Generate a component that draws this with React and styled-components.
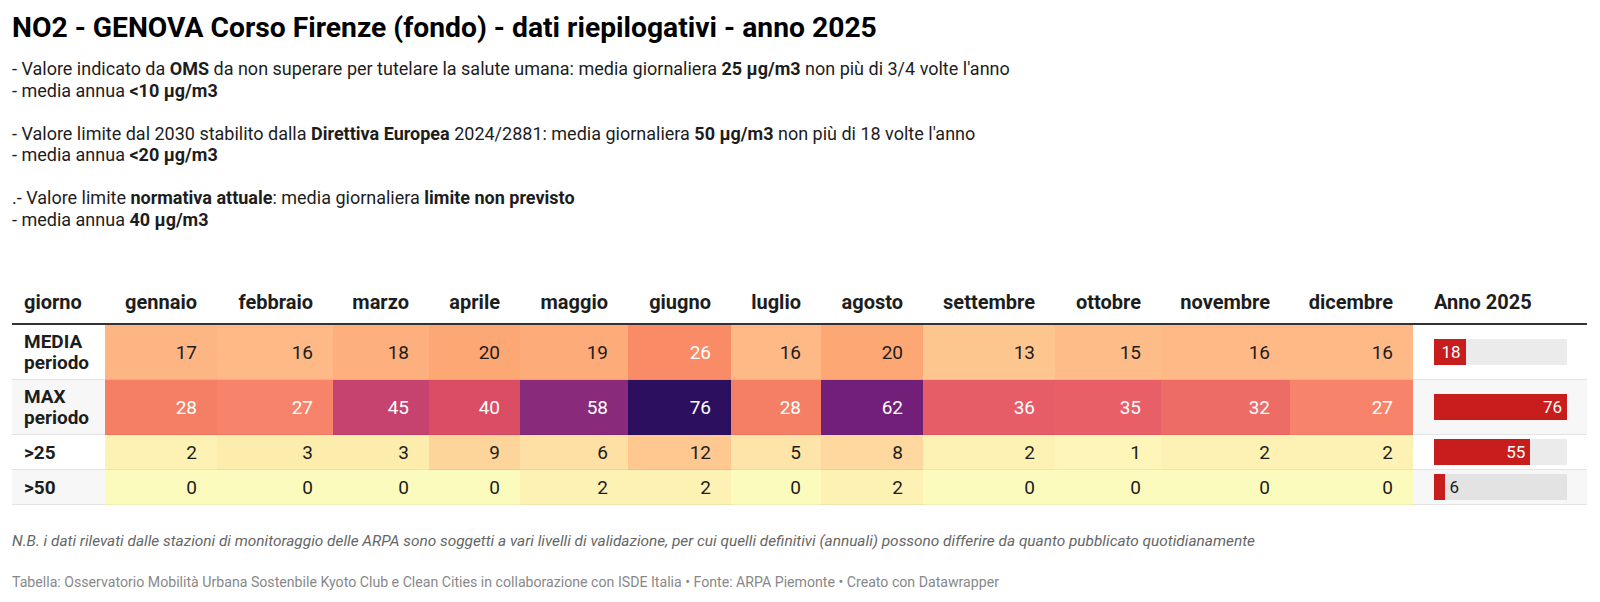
import React from "react";
import styled, { createGlobalStyle } from "styled-components";

const Global = createGlobalStyle`
  html, body { margin: 0; padding: 0; background: #fff; }
  body { font-family: Roboto, "Noto Sans", "Liberation Sans", sans-serif; color: #1d1d1d; }
`;

const Page = styled.div`
  padding: 12px 13px 0 12px;
  width: 1600px;
  box-sizing: border-box;
`;

const Title = styled.h1`
  margin: 0;
  font-size: 28.25px;
  line-height: 32px;
  font-weight: 700;
  color: #000;
`;

const Description = styled.div`
  margin-top: 14px;
  font-size: 18px;
  line-height: 21.5px;
  color: #1d1d1d;
`;

const Para = styled.p`
  margin: 0 0 21.5px 0;
  &:last-child { margin-bottom: 0; }
`;

const Table = styled.table`
  margin-top: 51px;
  width: 1575px;
  border-collapse: collapse;
  table-layout: fixed;
`;

const HeadCell = styled.th`
  font-size: 20px;
  font-weight: 700;
  line-height: 24px;
  color: #1d1d1d;
  text-align: ${(p) => p.$align};
  padding: 9px ${(p) => (p.$align === "right" ? "20px" : "0")} 9px
    ${(p) => (p.$first ? "12px" : p.$align === "left" ? "21px" : "0")};
  border-bottom: 2px solid #333;
  white-space: nowrap;
`;

const Row = styled.tr`
  background: ${(p) => (p.$striped ? "#f7f7f7" : "#fff")};
`;

const LabelCell = styled.td`
  font-size: 19px;
  font-weight: 700;
  line-height: 21px;
  padding: 6px 0 6px 12px;
  border-bottom: 1px solid #e3e3e3;
  color: #1d1d1d;
`;

const HeatCell = styled.td`
  font-size: 19px;
  line-height: 21px;
  text-align: right;
  padding: 6px 20px 6px 0;
  background: ${(p) => p.$bg};
  color: ${(p) => (p.$light ? "#fff" : "#1d1d1d")};
  border-bottom: 1px solid rgba(0, 0, 0, 0.05);
`;

const BarCell = styled.td`
  padding: 4px 20px 4px 21px;
  border-bottom: 1px solid #e3e3e3;
`;

const Track = styled.div`
  width: 133px;
  height: 26px;
  background: rgba(0, 0, 0, 0.08);
  display: flex;
`;

const Fill = styled.div`
  height: 100%;
  background: #c71e1d;
  display: flex;
  align-items: center;
  justify-content: flex-end;
  box-sizing: border-box;
  padding-right: 5px;
  color: #fff;
  font-size: 17px;
  line-height: 26px;
`;

const Outside = styled.span`
  font-size: 17px;
  line-height: 26px;
  color: #1d1d1d;
  padding-left: 5px;
`;

const Note = styled.p`
  margin: 26px 0 0 0;
  font-size: 15.4px;
  line-height: 20px;
  font-style: italic;
  color: #666;
`;

const Footer = styled.p`
  margin: 22px 0 0 0;
  font-size: 14.15px;
  line-height: 18px;
  color: #888;
`;

const Col = styled.col``;

const colWidths = [93, 112, 116, 96, 91, 108, 103, 90, 102, 132, 106, 129, 123, 174];
const months = [
  "gennaio", "febbraio", "marzo", "aprile", "maggio", "giugno",
  "luglio", "agosto", "settembre", "ottobre", "novembre", "dicembre",
];

const palette = {
  0: "#fcfbbe", 1: "#fdf6b8", 2: "#fdf2b4", 3: "#fdedad", 5: "#fee4a8",
  6: "#fee0a4", 8: "#fed89e", 9: "#fdd49a", 12: "#fec890", 13: "#fec68f",
  15: "#febc88", 16: "#feb986", 17: "#fdb584", 18: "#fdb07e", 19: "#fdab78",
  20: "#fca774", 26: "#f98b67", 27: "#f6836a", 28: "#f47f64", 32: "#ee6c66",
  35: "#e85f67", 36: "#e65d67", 40: "#da4d65", 45: "#c5436e", 58: "#892a7a",
  62: "#721f79", 76: "#2c0f5e",
};

const rows = [
  { label: ["MEDIA", "periodo"], values: [17, 16, 18, 20, 19, 26, 16, 20, 13, 15, 16, 16], total: 18 },
  { label: ["MAX", "periodo"], values: [28, 27, 45, 40, 58, 76, 28, 62, 36, 35, 32, 27], total: 76 },
  { label: [">25"], values: [2, 3, 3, 9, 6, 12, 5, 8, 2, 1, 2, 2], total: 55 },
  { label: [">50"], values: [0, 0, 0, 0, 2, 2, 0, 2, 0, 0, 0, 0], total: 6 },
];

const MAX = 76;

function Bar({ value }) {
  const w = (value / MAX) * 133;
  const inside = w > 28;
  return (
    <Track>
      <Fill style={{ width: `${w}px` }}>{inside ? value : null}</Fill>
      {!inside && <Outside>{value}</Outside>}
    </Track>
  );
}

export default function App() {
  return (
    <Page>
      <Global />
      <Title>NO2 - GENOVA Corso Firenze (fondo) - dati riepilogativi - anno 2025</Title>
      <Description>
        <Para>
          - Valore indicato da <b>OMS</b> da non superare per tutelare la salute umana: media giornaliera{" "}
          <b>25 µg/m3</b> non più di 3/4 volte l'anno
          <br />- media annua <b>&lt;10 µg/m3</b>
        </Para>
        <Para>
          - Valore limite dal 2030 stabilito dalla <b>Direttiva Europea</b> 2024/2881: media giornaliera{" "}
          <b>50 µg/m3</b> non più di 18 volte l'anno
          <br />- media annua <b>&lt;20 µg/m3</b>
        </Para>
        <Para>
          .- Valore limite <b>normativa attuale</b>: media giornaliera <b>limite non previsto</b>
          <br />- media annua <b>40 µg/m3</b>
        </Para>
      </Description>
      <Table>
        <colgroup>
          {colWidths.map((w, i) => (
            <Col key={i} style={{ width: `${w}px` }} />
          ))}
        </colgroup>
        <thead>
          <tr>
            <HeadCell $align="left" $first>giorno</HeadCell>
            {months.map((m) => (
              <HeadCell key={m} $align="right">{m}</HeadCell>
            ))}
            <HeadCell $align="left">Anno 2025</HeadCell>
          </tr>
        </thead>
        <tbody>
          {rows.map((r, ri) => (
            <Row key={ri} $striped={ri % 2 === 1}>
              <LabelCell>
                {r.label.map((l, li) => (
                  <React.Fragment key={li}>
                    {li > 0 && <br />}
                    {l}
                  </React.Fragment>
                ))}
              </LabelCell>
              {r.values.map((v, vi) => (
                <HeatCell key={vi} $bg={palette[v]} $light={v >= 26}>
                  {v}
                </HeatCell>
              ))}
              <BarCell>
                <Bar value={r.total} />
              </BarCell>
            </Row>
          ))}
        </tbody>
      </Table>
      <Note>
        N.B. i dati rilevati dalle stazioni di monitoraggio delle ARPA sono soggetti a vari livelli di validazione, per cui quelli definitivi (annuali) possono differire da quanto pubblicato quotidianamente
      </Note>
      <Footer>
        Tabella: Osservatorio Mobilità Urbana Sostenbile Kyoto Club e Clean Cities in collaborazione con ISDE Italia • Fonte: ARPA Piemonte • Creato con Datawrapper
      </Footer>
    </Page>
  );
}
